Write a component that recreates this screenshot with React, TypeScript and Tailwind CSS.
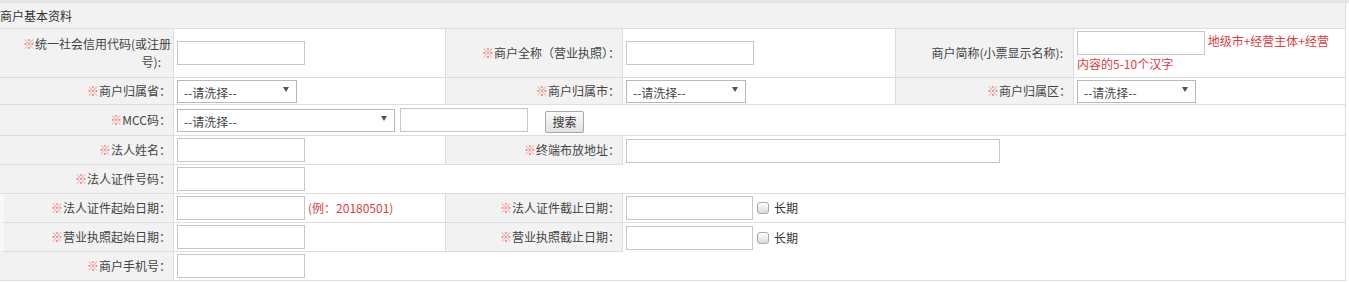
import React from "react";

const Req = () => <span className="text-[#f26d6d]">※</span>;

type LabelProps = {
  w: string;
  req?: boolean;
  extra?: string;
  children: React.ReactNode;
};

const Label = ({ w, req = true, extra = "", children }: LabelProps) => (
  <div
    className={`${w} shrink-0 flex items-center justify-end text-right pr-[2px] bg-[#f2f2f2] border-r border-b border-[#dddddd] ${extra}`}
  >
    <span className="leading-[18px]">
      {req && <Req />}
      {children}
    </span>
  </div>
);

type CellProps = { w: string; extra?: string; children?: React.ReactNode };

const Cell = ({ w, extra = "", children }: CellProps) => (
  <div
    className={`${w} shrink-0 flex items-center pl-[3px] bg-white border-r border-[#dddddd] ${extra}`}
  >
    {children}
  </div>
);

const TextInput = ({ w = "w-[128px]" }: { w?: string }) => (
  <input
    type="text"
    className={`${w} h-[24px] shrink-0 border border-[#c6c6c6] bg-white px-[3px] text-[12px] outline-none`}
  />
);

const Select = ({ w = "w-[120px]" }: { w?: string }) => (
  <div className={`relative ${w} h-[23px] shrink-0`}>
    <select className="w-full h-full appearance-none rounded-none border border-[#b8b8b8] bg-white pl-[6px] pt-[3px] text-[12px] text-[#444] outline-none">
      <option>--请洗择--</option>
    </select>
    <svg
      className="pointer-events-none absolute right-[8px] top-[7px]"
      width="6"
      height="5"
      viewBox="0 0 6 5"
    >
      <path d="M0 0H6L3 5Z" fill="#555" />
    </svg>
  </div>
);

const LongTerm = () => (
  <>
    <input
      type="checkbox"
      className="appearance-none w-[12px] h-[12px] ml-[4px] shrink-0 border border-[#a9a9a9] rounded-[3px] bg-linear-to-b from-white to-[#d9d9d9]"
    />
    <span className="ml-[5px] text-[#333]">长期</span>
  </>
);

export default function App() {
  return (
    <div className="w-full bg-white text-[12px] text-[#444] font-['Microsoft_YaHei','Noto_Sans_CJK_SC','Noto_Sans',sans-serif]">
      <div className="h-[3px] bg-[#e4e4e4]" />
      <div className="w-[1346px]">
        {/* 标题 */}
        <div className="h-[26px] flex items-center bg-[#f2f2f2] border-r border-b border-[#dddddd] text-[#333]">
          商户基本资料
        </div>

        <div className="flex h-[49px]">
          <Label w="w-[174px]">
            统一社会信用代码(或注册
            <br />
            <span className="pr-[10px]">号):</span>
          </Label>
          <Cell w="w-[272px]" extra="border-b">
            <TextInput />
          </Cell>
          <Label w="w-[177px]">商户全称（营业执照）：</Label>
          <Cell w="w-[273px]" extra="border-b">
            <TextInput />
          </Cell>
          <Label w="w-[178px]" req={false} extra="pr-[10px]">
            商户简称(小票显示名称):
          </Label>
          <div className="w-[272px] shrink-0 pl-[3px] pt-[2px] bg-white border-r border-b border-[#dddddd] leading-[18px] text-[#e03c3e]">
            <input
              type="text"
              className="w-[128px] h-[24px] align-middle border border-[#c6c6c6] bg-white outline-none"
            />{" "}
            地级市+经营主体+经营
            <br />
            内容的5-10个汉字
          </div>
        </div>

        <div className="flex h-[27px]">
          <Label w="w-[174px]">商户归属省：</Label>
          <Cell w="w-[272px]" extra="border-b">
            <Select />
          </Cell>
          <Label w="w-[177px]">商户归属市：</Label>
          <Cell w="w-[273px]" extra="border-b">
            <Select />
          </Cell>
          <Label w="w-[178px]">商户归属区：</Label>
          <Cell w="w-[272px]" extra="border-b">
            <Select w="w-[119px]" />
          </Cell>
        </div>

        <div className="flex h-[31px]">
          <Label w="w-[174px]">MCC码：</Label>
          <Cell w="w-[1172px]" extra="border-b">
            <Select w="w-[218px]" />
            <div className="ml-[5px] flex">
              <TextInput />
            </div>
            <button className="ml-[17px] mt-[3px] w-[39px] h-[22px] border border-[#a8a8a8] rounded-[2px] bg-linear-to-b from-[#fafafa] to-[#e2e2e2] text-[12px] text-[#333]">
              搜索
            </button>
          </Cell>
        </div>

        <div className="flex h-[29px]">
          <Label w="w-[174px]">法人姓名：</Label>
          <Cell w="w-[272px]" extra="border-b">
            <TextInput />
          </Cell>
          <Label w="w-[177px]">终端布放地址：</Label>
          <Cell w="w-[723px]">
            <TextInput w="w-[374px]" />
          </Cell>
        </div>

        <div className="flex h-[29px]">
          <Label w="w-[174px]">法人证件号码：</Label>
          <Cell w="w-[1172px]" extra="border-b">
            <TextInput />
          </Cell>
        </div>

        <div className="flex h-[29px]">
          <Label w="w-[174px]" extra="border-l-[4px] border-l-[#f8f8f8]">
            法人证件起始日期：
          </Label>
          <Cell w="w-[272px]" extra="border-b">
            <TextInput />
            <span className="ml-[3px] text-[#e03c3e]">(例：20180501)</span>
          </Cell>
          <Label w="w-[177px]">法人证件截止日期：</Label>
          <Cell w="w-[723px]" extra="border-b">
            <TextInput w="w-[127px]" />
            <LongTerm />
          </Cell>
        </div>

        <div className="flex h-[29px]">
          <Label w="w-[174px]" extra="border-l-[4px] border-l-[#f8f8f8]">
            营业执照起始日期：
          </Label>
          <Cell w="w-[272px]" extra="border-b">
            <TextInput />
          </Cell>
          <Label w="w-[177px]">营业执照截止日期：</Label>
          <Cell w="w-[723px]">
            <TextInput w="w-[127px]" />
            <LongTerm />
          </Cell>
        </div>

        <div className="flex h-[29px]">
          <Label w="w-[174px]">商户手机号：</Label>
          <Cell w="w-[1172px]" extra="border-b">
            <TextInput />
          </Cell>
        </div>
      </div>
    </div>
  );
}
